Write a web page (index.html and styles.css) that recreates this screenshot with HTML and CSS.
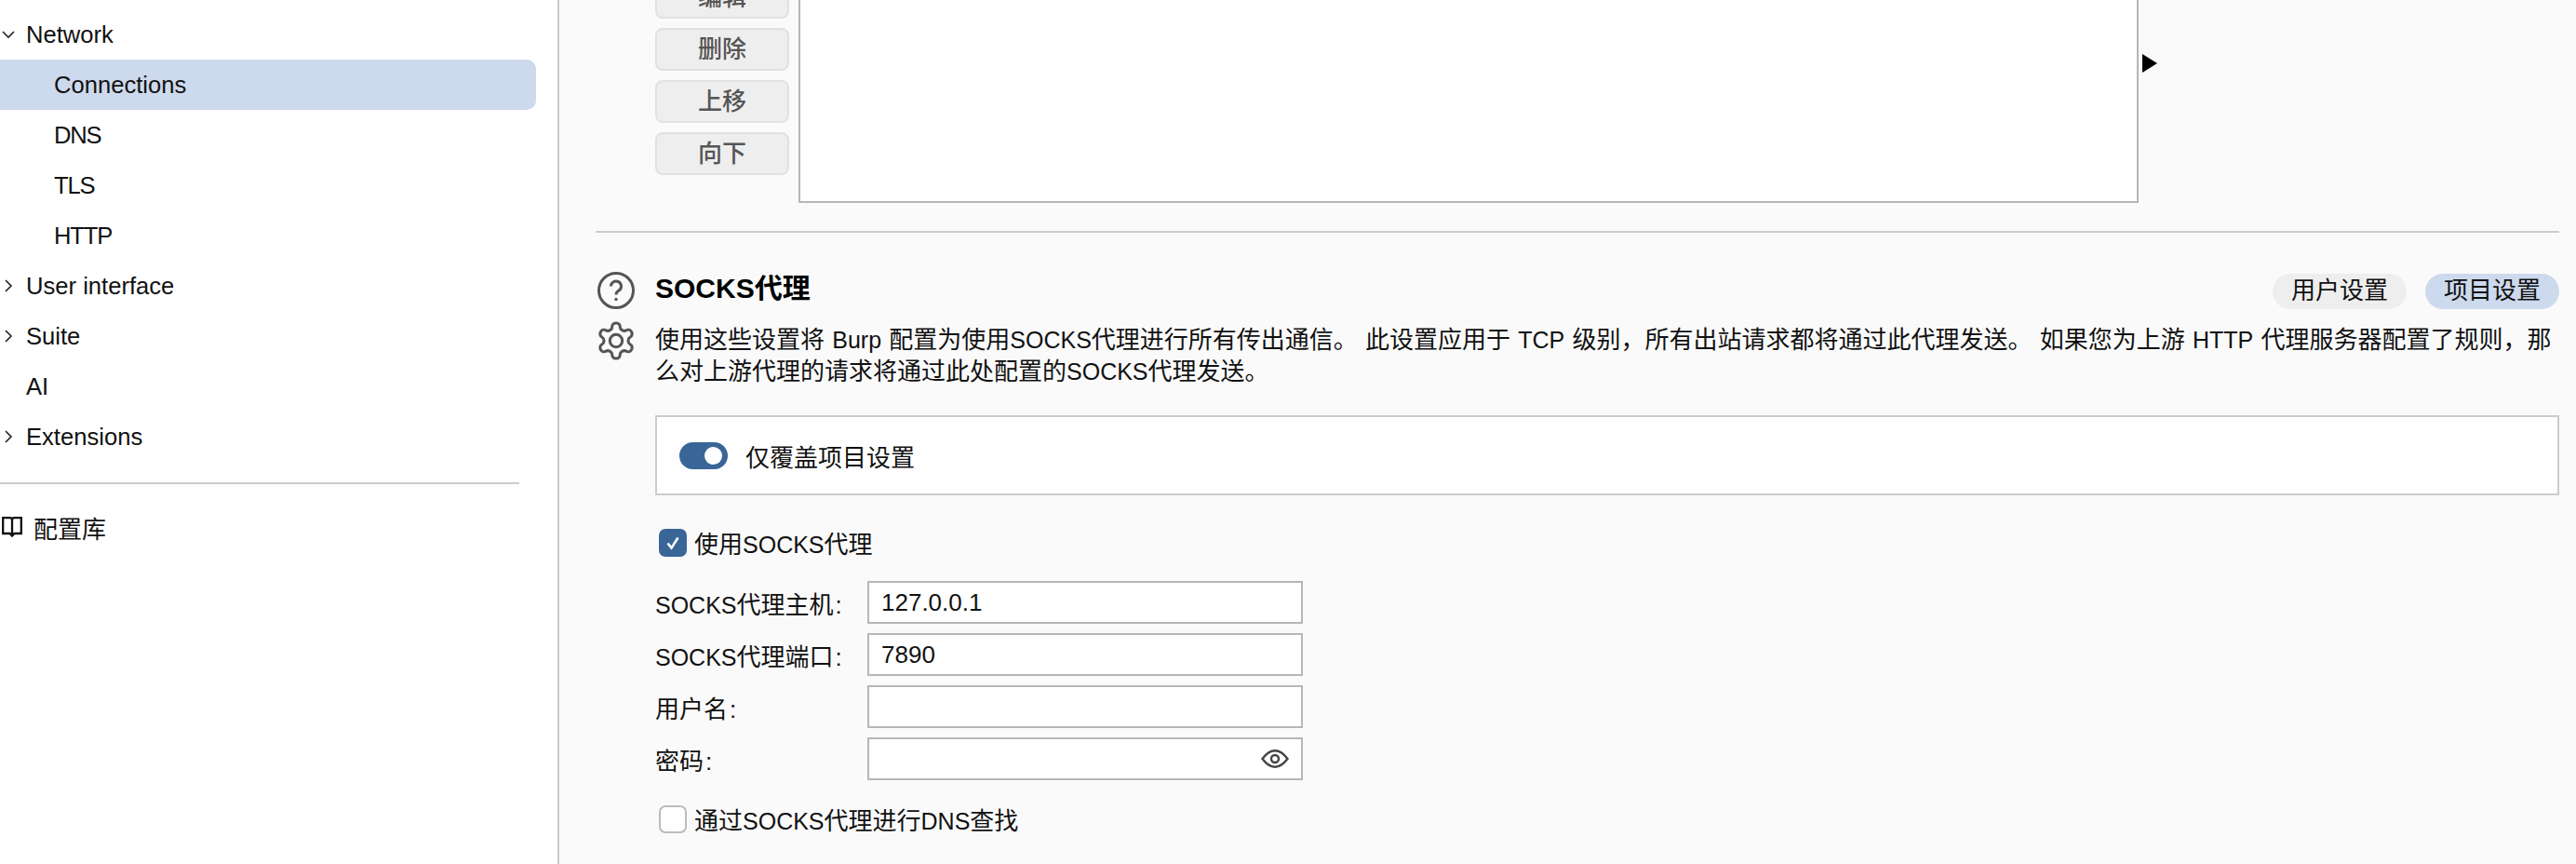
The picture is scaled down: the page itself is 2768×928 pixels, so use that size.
FILE: index.html
```html
<!DOCTYPE html>
<html lang="zh">
<head>
<meta charset="utf-8">
<title>Settings</title>
<link rel="stylesheet" href="styles.css">
</head>
<body>
<div class="app">
  <aside class="sidebar">
    <div class="row"><svg class="chev" viewBox="0 0 16 16"><path d="M2 5l6 6 6-6"/></svg><span>Network</span></div>
    <div class="row sub active"><span>Connections</span></div>
    <div class="row sub"><span class="caps">DNS</span></div>
    <div class="row sub"><span class="caps">TLS</span></div>
    <div class="row sub"><span class="caps">HTTP</span></div>
    <div class="row"><svg class="chev" viewBox="0 0 16 16"><path d="M5 2l6 6-6 6"/></svg><span>User interface</span></div>
    <div class="row"><svg class="chev" viewBox="0 0 16 16"><path d="M5 2l6 6-6 6"/></svg><span>Suite</span></div>
    <div class="row"><span class="chev"></span><span>AI</span></div>
    <div class="row"><svg class="chev" viewBox="0 0 16 16"><path d="M5 2l6 6-6 6"/></svg><span>Extensions</span></div>
    <div class="side-rule"></div>
    <div class="lib"><svg class="book" viewBox="0 0 22 24"><path d="M1.200 2.200H8.500Q11 2.200 11 4.500Q11 2.200 13.500 2.200H20.800V19H13.500L11 21.500L8.500 19H1.200ZM11 4.500V20"/></svg><span>配置库</span></div>
  </aside>
  <main class="main">
    <div class="list-block">
      <div class="btns">
        <div class="btn">编辑</div>
        <div class="btn">删除</div>
        <div class="btn">上移</div>
        <div class="btn">向下</div>
      </div>
      <div class="list-box"></div>
      <div class="arrow"></div>
    </div>
    <div class="rule"></div>
    <section class="section">
      <div class="icons">
        <svg class="help" viewBox="0 0 40 40"><circle cx="20" cy="20" r="18.500"/><path d="M14.500 15.500a5.500 5.500 0 1 1 8.500 4.600c-2 1.300-3 2.400-3 4.400"/><circle class="dot" cx="20" cy="29.500" r="1.700"/></svg>
        <svg class="gear" viewBox="1 1 22 22"><path d="M12.220 2h-.44a2 2 0 0 0-2 2v.18a2 2 0 0 1-1 1.730l-.43.25a2 2 0 0 1-2 0l-.15-.08a2 2 0 0 0-2.730.73l-.22.38a2 2 0 0 0 .73 2.730l.15.1a2 2 0 0 1 1 1.720v.51a2 2 0 0 1-1 1.740l-.15.09a2 2 0 0 0-.73 2.730l.22.38a2 2 0 0 0 2.730.73l.15-.08a2 2 0 0 1 2 0l.43.25a2 2 0 0 1 1 1.730V20a2 2 0 0 0 2 2h.44a2 2 0 0 0 2-2v-.18a2 2 0 0 1 1-1.730l.43-.25a2 2 0 0 1 2 0l.15.08a2 2 0 0 0 2.730-.73l.22-.39a2 2 0 0 0-.73-2.730l-.15-.08a2 2 0 0 1-1-1.740v-.5a2 2 0 0 1 1-1.740l.15-.09a2 2 0 0 0 .73-2.730l-.22-.38a2 2 0 0 0-2.730-.73l-.15.08a2 2 0 0 1-2 0l-.43-.25a2 2 0 0 1-1-1.730V4a2 2 0 0 0-2-2z"/><circle cx="12" cy="12" r="3.500"/></svg>
      </div>
      <div class="body">
        <div class="head">
          <h2 class="title">SOCKS代理</h2>
          <div class="pills">
            <div class="pill">用户设置</div>
            <div class="pill on">项目设置</div>
          </div>
        </div>
        <div class="desc">
          <div class="desc-line">使用这些设置将 <span class="en">Burp</span> 配置为使用<span class="en">SOCKS</span>代理进行所有传出通信。 此设置应用于 <span class="en">TCP</span> 级别，所有出站请求都将通过此代理发送。 如果您为上游 <span class="en">HTTP</span> 代理服务器配置了规则，那</div>
          <div class="desc-line">么对上游代理的请求将通过此处配置的<span class="en">SOCKS</span>代理发送。</div>
        </div>
        <div class="override">
          <div class="toggle"><div class="knob"></div></div>
          <span>仅覆盖项目设置</span>
        </div>
        <div class="check-row first">
          <div class="check on"><svg viewBox="0 0 30 30"><path d="M9.500 15.500l4 5 7-11"/></svg></div>
          <span class="check-label">使用<span class="en">SOCKS</span>代理</span>
        </div>
        <div class="fields">
          <div class="field"><label><span class="en">SOCKS</span>代理主机<span class="colon">:</span></label><div class="input">127.0.0.1</div></div>
          <div class="field"><label><span class="en">SOCKS</span>代理端口<span class="colon">:</span></label><div class="input">7890</div></div>
          <div class="field"><label>用户名<span class="colon">:</span></label><div class="input"></div></div>
          <div class="field"><label>密码<span class="colon">:</span></label><div class="input has-eye"><svg class="eye" viewBox="0 0 30 20"><path d="M1.500 10C6 4 10 1.300 15 1.300S24 4 28.500 10C24 16 20 18.700 15 18.700S6 16 1.500 10z"/><circle cx="15" cy="10" r="4"/></svg></div></div>
        </div>
        <div class="check-row last">
          <div class="check"></div>
          <span class="check-label">通过<span class="en">SOCKS</span>代理进行<span class="en">DNS</span>查找</span>
        </div>
      </div>
    </section>
  </main>
</div>
</body>
</html>
```

FILE: styles.css
```css
* { box-sizing: border-box; }
html, body { margin: 0; height: 100%; overflow: hidden; background: #fafafa; }
body {
  font-family: "Liberation Sans", "Noto Sans CJK SC", sans-serif;
  font-size: 26px;
  color: #111;
}
.app { display: flex; height: 928px; overflow: hidden; }
.en { font-size: 25px; }
.colon { margin-left: 2px; }

.sidebar {
  flex: 0 0 601px;
  background: #fff;
  border-right: 2px solid #ccc;
  padding: 10px 23px 0 0;
}
.row {
  display: flex;
  align-items: center;
  height: 54px;
  line-height: 54px;
  font-size: 25.6px;
}
.row.sub { padding-left: 58px; }
.row.active { background: #cdd9ed; border-radius: 0 10px 10px 0; }
.caps { letter-spacing: -1.2px; }
.chev {
  flex: 0 0 16px;
  width: 16px;
  height: 16px;
  margin: 0 11px 0 1px;
  fill: none;
  stroke: #222;
  stroke-width: 1.6;
}
.side-rule { height: 2px; background: #ccc; width: 558px; margin-top: 22px; }
.lib { display: flex; align-items: center; height: 52px; margin-top: 20px; }
.book {
  width: 22px;
  height: 24px;
  margin: 0 12px 0 2px;
  fill: none;
  stroke: #111;
  stroke-width: 2.300;
}

.main { flex: 1; min-width: 0; padding: 0 18px 0 39px; }
.list-block {
  display: flex;
  height: 244px;
  margin-top: -26px;
  padding-left: 64px;
}
.btns { display: flex; flex-direction: column; gap: 10px; width: 144px; }
.btn {
  height: 46px;
  background: #eee;
  border: 2px solid #e1e1e1;
  border-radius: 8px;
  color: #555;
  font-weight: 500;
  text-align: center;
  line-height: 42px;
}
.list-box {
  width: 1440px;
  margin-left: 10px;
  background: #fff;
  border: 2px solid #b9b5b5;
}
.arrow {
  align-self: flex-start;
  margin: 84px 0 0 4px;
  width: 0;
  height: 0;
  border-left: 16px solid #000;
  border-top: 10px solid transparent;
  border-bottom: 10px solid transparent;
}
.rule { height: 2px; background: #ccc; margin-top: 30px; }

.section { display: flex; padding-top: 42px; }
.icons { flex: 0 0 64px; display: flex; flex-direction: column; gap: 13px; }
.help { width: 40px; height: 40px; margin-left: 2px; fill: none; stroke: #555; stroke-width: 3; }
.help .dot { fill: #555; stroke: none; }
.gear { width: 42px; height: 42px; margin-left: 1px; fill: none; stroke: #555; stroke-width: 1.600; }
.body { flex: 1; min-width: 0; padding-top: 2px; }
.head { display: flex; justify-content: space-between; align-items: flex-start; }
.title { margin: 0; font-size: 30px; line-height: 32px; font-weight: 700; color: #000; }
.pills { display: flex; gap: 20px; }
.pill {
  height: 38px;
  line-height: 37px;
  padding: 0 20px;
  border-radius: 19px;
  background: #eee;
}
.pill.on { background: #cdd9ed; }
.desc { margin-top: 16px; }
.desc-line { height: 34px; line-height: 34px; white-space: nowrap; word-spacing: 1px; }
.override {
  display: flex;
  align-items: center;
  height: 86px;
  margin-top: 30px;
  padding-left: 24px;
  background: #fefefe;
  border: 2px solid #ccc;
}
.toggle {
  position: relative;
  width: 52px;
  height: 29px;
  margin-right: 19px;
  border-radius: 15px;
  background: #3a6598;
}
.knob {
  position: absolute;
  right: 6px;
  top: 5px;
  width: 19px;
  height: 19px;
  border-radius: 50%;
  background: #fff;
}
.check-row { display: flex; align-items: center; height: 30px; margin-left: 4px; }
.check-row.first { margin-top: 36px; }
.check-row.last { margin-top: 27px; }
.check-label { margin-top: -2px; }
.check {
  width: 30px;
  height: 30px;
  margin-right: 8px;
  border: 2px solid #bbb;
  border-radius: 7px;
  background: #fefefe;
}
.check.on { background: #3a6598; border: 0; }
.check svg { display: block; width: 30px; height: 30px; fill: none; stroke: #fff; stroke-width: 2.500; }
.fields { display: flex; flex-direction: column; gap: 10px; margin-top: 26px; }
.field { display: flex; align-items: center; }
.field label { flex: 0 0 228px; }
.input {
  display: flex;
  align-items: center;
  width: 468px;
  height: 46px;
  padding: 0 13px;
  background: #fff;
  border: 2px solid #b9b5b5;
}
.has-eye { justify-content: flex-end; }
.eye { width: 30px; height: 20px; fill: none; stroke: #444; stroke-width: 2.400; }
```
